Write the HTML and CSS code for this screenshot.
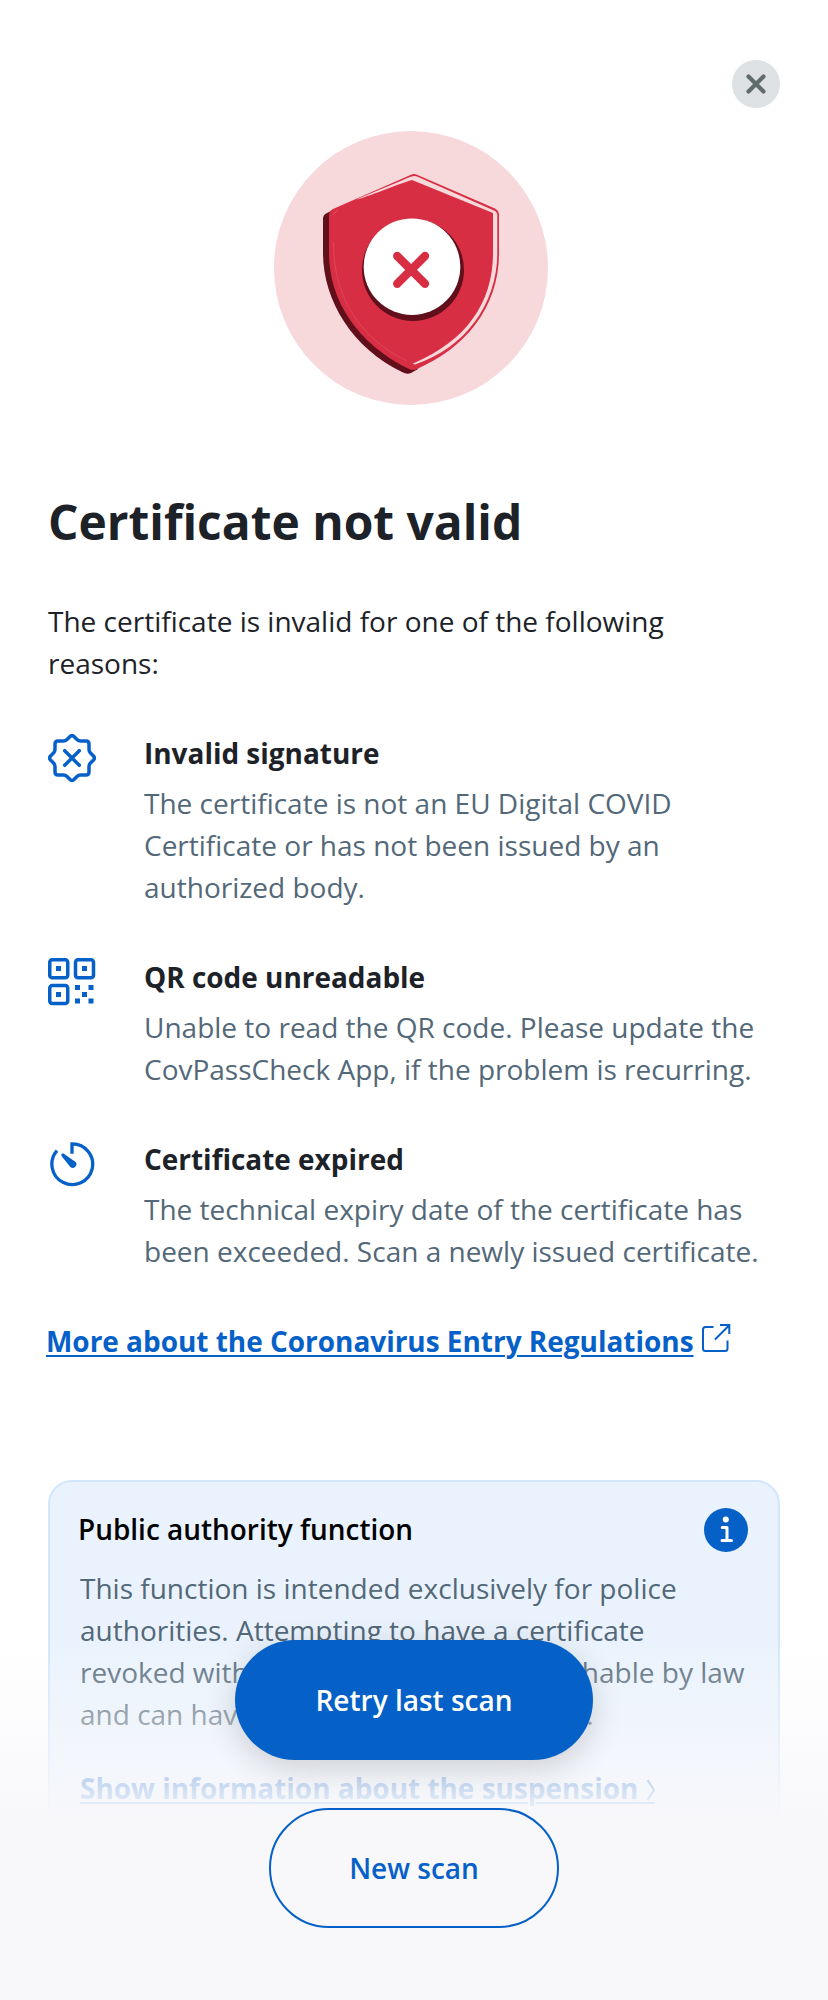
FILE: index.html
```html
<!DOCTYPE html>
<html lang="en">
<head>
<meta charset="utf-8">
<title>Certificate not valid</title>
<link rel="stylesheet" href="styles.css">
</head>
<body>
<main class="sheet">
  <header class="top">
    <button class="close" aria-label="Close">
      <svg width="48" height="48" viewBox="0 0 48 48"><path d="M16.500 16.500L31.500 31.500M31.500 16.500L16.500 31.500" stroke="#606b6b" stroke-width="4.200" stroke-linecap="round"/></svg>
    </button>
  </header>
  <div class="hero">
    <svg width="300" height="300" viewBox="0 0 300 300">
      <circle cx="151" cy="148" r="137" fill="#f7d8db"/>
      <path d="M71 91L66 93.500Q63 95 63 99L63 133C63 180 92 228 142 252Q147 255 151 253L158 249L150 170Z" fill="#600f1b"/>
      <path d="M151 54.800Q154 53.300 157 54.800L235 88.500Q239 90.500 239 95V133C239 188 205 228 157 249Q153 251 149 249C98 224 69 181 69 133V95Q69 91 73 89Z" fill="#d72e43"/>
      <path d="M143 60Q154 54.500 157 56.500L234 90.500Q237.300 92 237.300 95V133C237.300 184 205 228 155 244.500L152.500 243.700C207 221 233 182 233 133V93L152 60C135 65 108 77 96 79.500Z" fill="#f7d8db"/>
      <path d="M73.500 95Q74 92 78 90" fill="none" stroke="#e87582" stroke-width=".5"/>
      <path d="M73.500 122C73 178 101 219 147 241" fill="none" stroke="#e45668" stroke-width=".6"/>
      <circle cx="153" cy="150" r="51" fill="#600f1b"/>
      <circle cx="152" cy="146.700" r="48.300" fill="#fff"/>
      <path d="M137.200 136L165 163.800M165 136L137.200 163.800" stroke="#d72e43" stroke-width="8.300" stroke-linecap="round"/>
    </svg>
  </div>
  <h1 class="title">Certificate not valid</h1>
  <p class="intro">The certificate is invalid for one of the following reasons:</p>
  <ul class="reasons">
    <li class="reason">
      <svg class="icon" width="48" height="48" viewBox="0 0 48 48" fill="none" stroke="#0560c8" stroke-width="3.500" stroke-linecap="round" stroke-linejoin="round">
        <path d="M22 2.500Q24 .700 26 2.500L29 5.500Q30.500 7 32.500 7H38Q41 7 41 10V15.500Q41 17.500 42.500 19L45.500 22Q47.300 24 45.500 26L42.500 29Q41 30.500 41 32.500V38Q41 41 38 41H32.500Q30.500 41 29 42.500L26 45.500Q24 47.300 22 45.500L19 42.500Q17.500 41 15.500 41H10Q7 41 7 38V32.500Q7 30.500 5.500 29L2.500 26Q.700 24 2.500 22L5.500 19Q7 17.500 7 15.500V10Q7 7 10 7H15.500Q17.500 7 19 5.500Z"/>
        <path d="M16.700 16.700L31.300 31.300M31.300 16.700L16.700 31.300"/>
      </svg>
      <div>
        <h2 class="name">Invalid signature</h2>
        <p class="text">The certificate is not an EU Digital COVID Certificate or has not been issued by an authorized body.</p>
      </div>
    </li>
    <li class="reason">
      <svg class="icon" width="48" height="48" viewBox="0 0 48 48">
        <g fill="none" stroke="#0560c8" stroke-width="3.500">
          <rect x="1.750" y="1.750" width="18" height="18" rx="2.500"/>
          <rect x="27.500" y="1.750" width="18" height="18" rx="2.500"/>
          <rect x="1.750" y="27.500" width="18" height="18" rx="2.500"/>
        </g>
        <path fill="#0560c8" d="M8 8h5v5h-5zM34 8h5v5h-5zM8 34h5v5h-5zM27 27h5v5h-5zM40.500 27h5v5h-5zM34 34h5v5h-5zM27 40.500h5v5h-5zM40.500 40.500h5v5h-5z"/>
      </svg>
      <div>
        <h2 class="name">QR code unreadable</h2>
        <p class="text">Unable to read the QR code. Please update the CovPassCheck App, if the problem is recurring.</p>
      </div>
    </li>
    <li class="reason">
      <svg class="icon" width="48" height="48" viewBox="0 0 48 48">
        <path d="M24 13.500V3.600A20.400 20.400 0 1 1 9 10.500" transform="translate(0 .2)" fill="none" stroke="#0560c8" stroke-width="3.300"/>
        <path d="M14 13.600Q12.800 14.500 13.500 16L22.300 27A3.700 3.700 0 0 0 27.600 21.900L15.500 13.500Z" fill="#0560c8"/>
      </svg>
      <div>
        <h2 class="name">Certificate expired</h2>
        <p class="text">The technical expiry date of the certificate has been exceeded. Scan a newly issued certificate.</p>
      </div>
    </li>
  </ul>
  <div class="more">
    <a class="link" href="#">More about the Coronavirus Entry Regulations</a>
    <svg class="external" width="30" height="30" viewBox="0 0 30 30" fill="none" stroke="#0560c8" stroke-width="2">
      <path d="M12.500 4H4.500Q2 4 2 6.500V25.500Q2 28 4.500 28H24Q26.500 28 26.500 25.500V17.500M14 16.500L27.500 3M19 2H28.300V11"/>
    </svg>
  </div>
  <section class="card">
    <div class="card-head">
      <h2 class="card-title">Public authority function</h2>
      <svg width="44" height="44" viewBox="0 0 44 44">
        <circle cx="22" cy="22" r="22" fill="#0560c8"/>
        <circle cx="21.800" cy="11.500" r="3" fill="#fff"/>
        <path d="M18.200 19.500H23V32.500M18 32.500H27.500" fill="none" stroke="#fff" stroke-width="3" stroke-linecap="round" stroke-linejoin="round"/>
      </svg>
    </div>
    <p class="text">This function is intended exclusively for police authorities. Attempting to have a certificate revoked without authorization is punishable by law and can have significant consequences.</p>
    <a class="link suspend" href="#">Show information about the suspension<span class="gap">&nbsp;&nbsp;</span><svg class="chevron" width="9" height="22" viewBox="0 0 9 22"><path d="M1.500 1L8 11L1.500 21" fill="none" stroke="#0560c8" stroke-width="2"/></svg></a>
  </section>
</main>
<footer class="actions">
  <button class="button primary">Retry last scan</button>
  <button class="button secondary">New scan</button>
</footer>
</body>
</html>
```
FILE: styles.css
```css
* { box-sizing: border-box; }
body {
  position: relative;
  width: 828px;
  height: 2000px;
  margin: 0;
  overflow: hidden;
  background: #fff;
  color: #1c2228;
  font: 28px/42px "Open Sans", sans-serif;
}
h1, h2, p, ul { margin: 0; padding: 0; }
button { padding: 0; font: inherit; cursor: pointer; }
svg { display: block; flex: none; }
.sheet { padding: 60px 48px 0; }
.top { display: flex; justify-content: flex-end; height: 60px; }
.close {
  width: 48px;
  height: 48px;
  border: 0;
  border-radius: 50%;
  background: #dee2e5;
}
.hero { padding-left: 212px; }
.title {
  margin-top: 66px;
  font-size: 47.9px;
  line-height: 72px;
  font-weight: 700;
}
.intro { margin-top: 42px; }
.reasons { display: grid; gap: 48px; margin-top: 48px; list-style: none; }
.reason { display: grid; grid-template-columns: 48px 1fr; column-gap: 48px; }
.icon { margin-top: 2px; }
.name { font-size: 27.95px; font-weight: 700; }
.text { color: #536878; }
.reason .text { margin-top: 8px; }
.more { display: flex; gap: 7px; margin: 48px 0 0 -2px; }
.link {
  color: #0560c8;
  font-size: 27.95px;
  font-weight: 700;
  text-decoration-thickness: 2px;
  text-underline-offset: 3px;
}
.external { margin-top: 3px; }
.card {
  height: 400px;
  margin-top: 118px;
  padding: 26px 30px;
  border: 2px solid #d2e6fc;
  border-radius: 24px;
  background: #eaf3fd;
}
.card-head { display: flex; align-items: flex-start; justify-content: space-between; margin-left: -2px; }
.card-title { color: #000; font-size: 27.95px; font-weight: 600; }
.card .text { margin-top: 15px; }
.suspend { display: block; margin-top: 32px; }
.gap { letter-spacing: 1px; }
.chevron { display: inline-block; margin-left: -9px; vertical-align: -2px; }
.actions {
  position: absolute;
  right: 0;
  bottom: 0;
  left: 0;
  display: flex;
  flex-direction: column;
  align-items: center;
  gap: 48px;
  height: 360px;
  background: linear-gradient(rgba(248, 248, 251, 0), #f8f8fb 180px);
}
.button { height: 120px; border-radius: 60px; font-weight: 600; }
.primary {
  width: 358px;
  border: 0;
  background: #0560c8;
  color: #fff;
  box-shadow: 0 8px 32px rgba(0, 0, 0, .16);
}
.secondary {
  width: 290px;
  border: 2px solid #0560c8;
  background: #f8f8fb;
  color: #0560c8;
}
```
